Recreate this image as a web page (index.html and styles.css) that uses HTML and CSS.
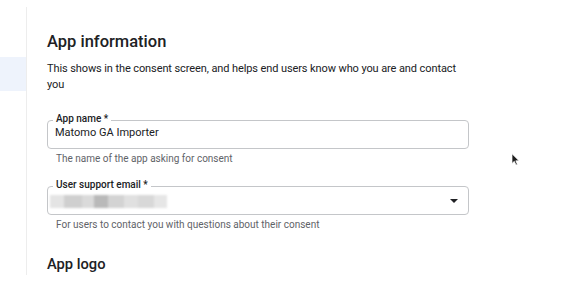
FILE: index.html
```html
<!DOCTYPE html>
<html lang="en">
<head>
    <meta charset="UTF-8">
    <title>OAuth consent screen - App information</title>
    <link rel="stylesheet" href="styles.css">
</head>
<body>
    <div class="layout">
        <!-- Left navigation rail -->
        <nav class="side-nav">
            <div class="nav-item"></div>
            <div class="nav-item active"></div>
        </nav>

        <main class="content">
            <h2 class="section-title">App information</h2>
            <p class="section-desc">This shows in the consent screen, and helps end users know who you are and contact you</p>

            <div class="field">
                <div class="field-box">
                    <span class="field-label">App name *</span>
                    <span class="field-value">Matomo GA Importer</span>
                </div>
                <div class="field-hint">The name of the app asking for consent</div>
            </div>

            <div class="field">
                <div class="field-box select">
                    <span class="field-label">User support email *</span>
                    <span class="blurred">
                        <span class="px p1"></span><span class="px p2"></span><span class="px p3"></span><span class="px p4"></span><span class="px p5"></span><span class="px p6"></span><span class="px p7"></span><span class="px p8"></span>
                    </span>
                    <span class="arrow"></span>
                </div>
                <div class="field-hint">For users to contact you with questions about their consent</div>
            </div>

            <h2 class="section-title small">App logo</h2>
        </main>

        <!-- mouse pointer -->
        <svg class="pointer" width="9" height="13" viewBox="0 0 9 13">
            <path d="M1 0.8 L1 10.5 L3.3 8.3 L5 12 L6.4 11.4 L4.8 7.8 L8 7.8 Z" fill="#1e1e1e" stroke="#fff" stroke-width="0.7"/>
        </svg>
    </div>
</body>
</html>
```

FILE: styles.css
```css
body {
    margin: 0;
    font-family: Roboto, "Noto Sans", sans-serif;
    color: #202124;
    background: #fff;
}

.layout {
    position: relative;
    display: flex;
    height: 292px;
    overflow: hidden;
}

.side-nav {
    width: 26px;
    flex-shrink: 0;
    margin-top: 7px;
    height: 268px;
    border-right: 1px solid #ededed;
}

.nav-item {
    height: 50px;
}

.nav-item.active {
    height: 34px;
    background-color: #eef3fc;
}

.content {
    flex: 1;
    padding: 32px 0 0 20px;
    max-width: 422px;
}

.section-title {
    font-size: 16.5px;
    line-height: 20px;
    font-weight: 500;
    margin: 0 0 9px 0;
}

.section-title.small {
    font-size: 14.7px;
    line-height: 18px;
    margin-top: 24px;
}

.section-desc {
    font-size: 11px;
    line-height: 16px;
    letter-spacing: -0.1px;
    margin: 0 0 27px 0;
}

.field {
    margin-bottom: 21px;
}

.field-box {
    position: relative;
    box-sizing: border-box;
    height: 29px;
    border: 1px solid #c4c6c9;
    border-radius: 4px;
    display: flex;
    align-items: flex-start;
    padding: 0 10px 0 7px;
}

.field-label {
    position: absolute;
    top: -8px;
    left: 5px;
    padding: 0 3px;
    background: #fff;
    font-size: 10px;
    font-weight: 500;
    line-height: 12px;
}

.field-value {
    font-size: 11px;
    line-height: 16px;
    padding-top: 4px;
}

.blurred {
    display: flex;
    margin-top: 8px;
    margin-left: -5px;
    height: 13px;
    filter: blur(1.2px);
}

.px {
    height: 13px;
}

.p1 { width: 14px; background: #e4e4e4; }
.p2 { width: 18px; background: #cfcfcf; }
.p3 { width: 12px; background: #dadada; }
.p4 { width: 14px; background: #b9b9b9; }
.p5 { width: 16px; background: #d3d3d3; }
.p6 { width: 14px; background: #e0e0e0; }
.p7 { width: 16px; background: #d8d8d8; }
.p8 { width: 13px; background: #e6e6e6; }

.arrow {
    margin-left: auto;
    margin-top: 12px;
    width: 0;
    height: 0;
    border-left: 4px solid transparent;
    border-right: 4px solid transparent;
    border-top: 4px solid #202124;
}

.field-hint {
    font-size: 10px;
    line-height: 12px;
    color: #5f6368;
    padding: 4px 0 0 9px;
}

.pointer {
    position: absolute;
    left: 511px;
    top: 153px;
}
```
